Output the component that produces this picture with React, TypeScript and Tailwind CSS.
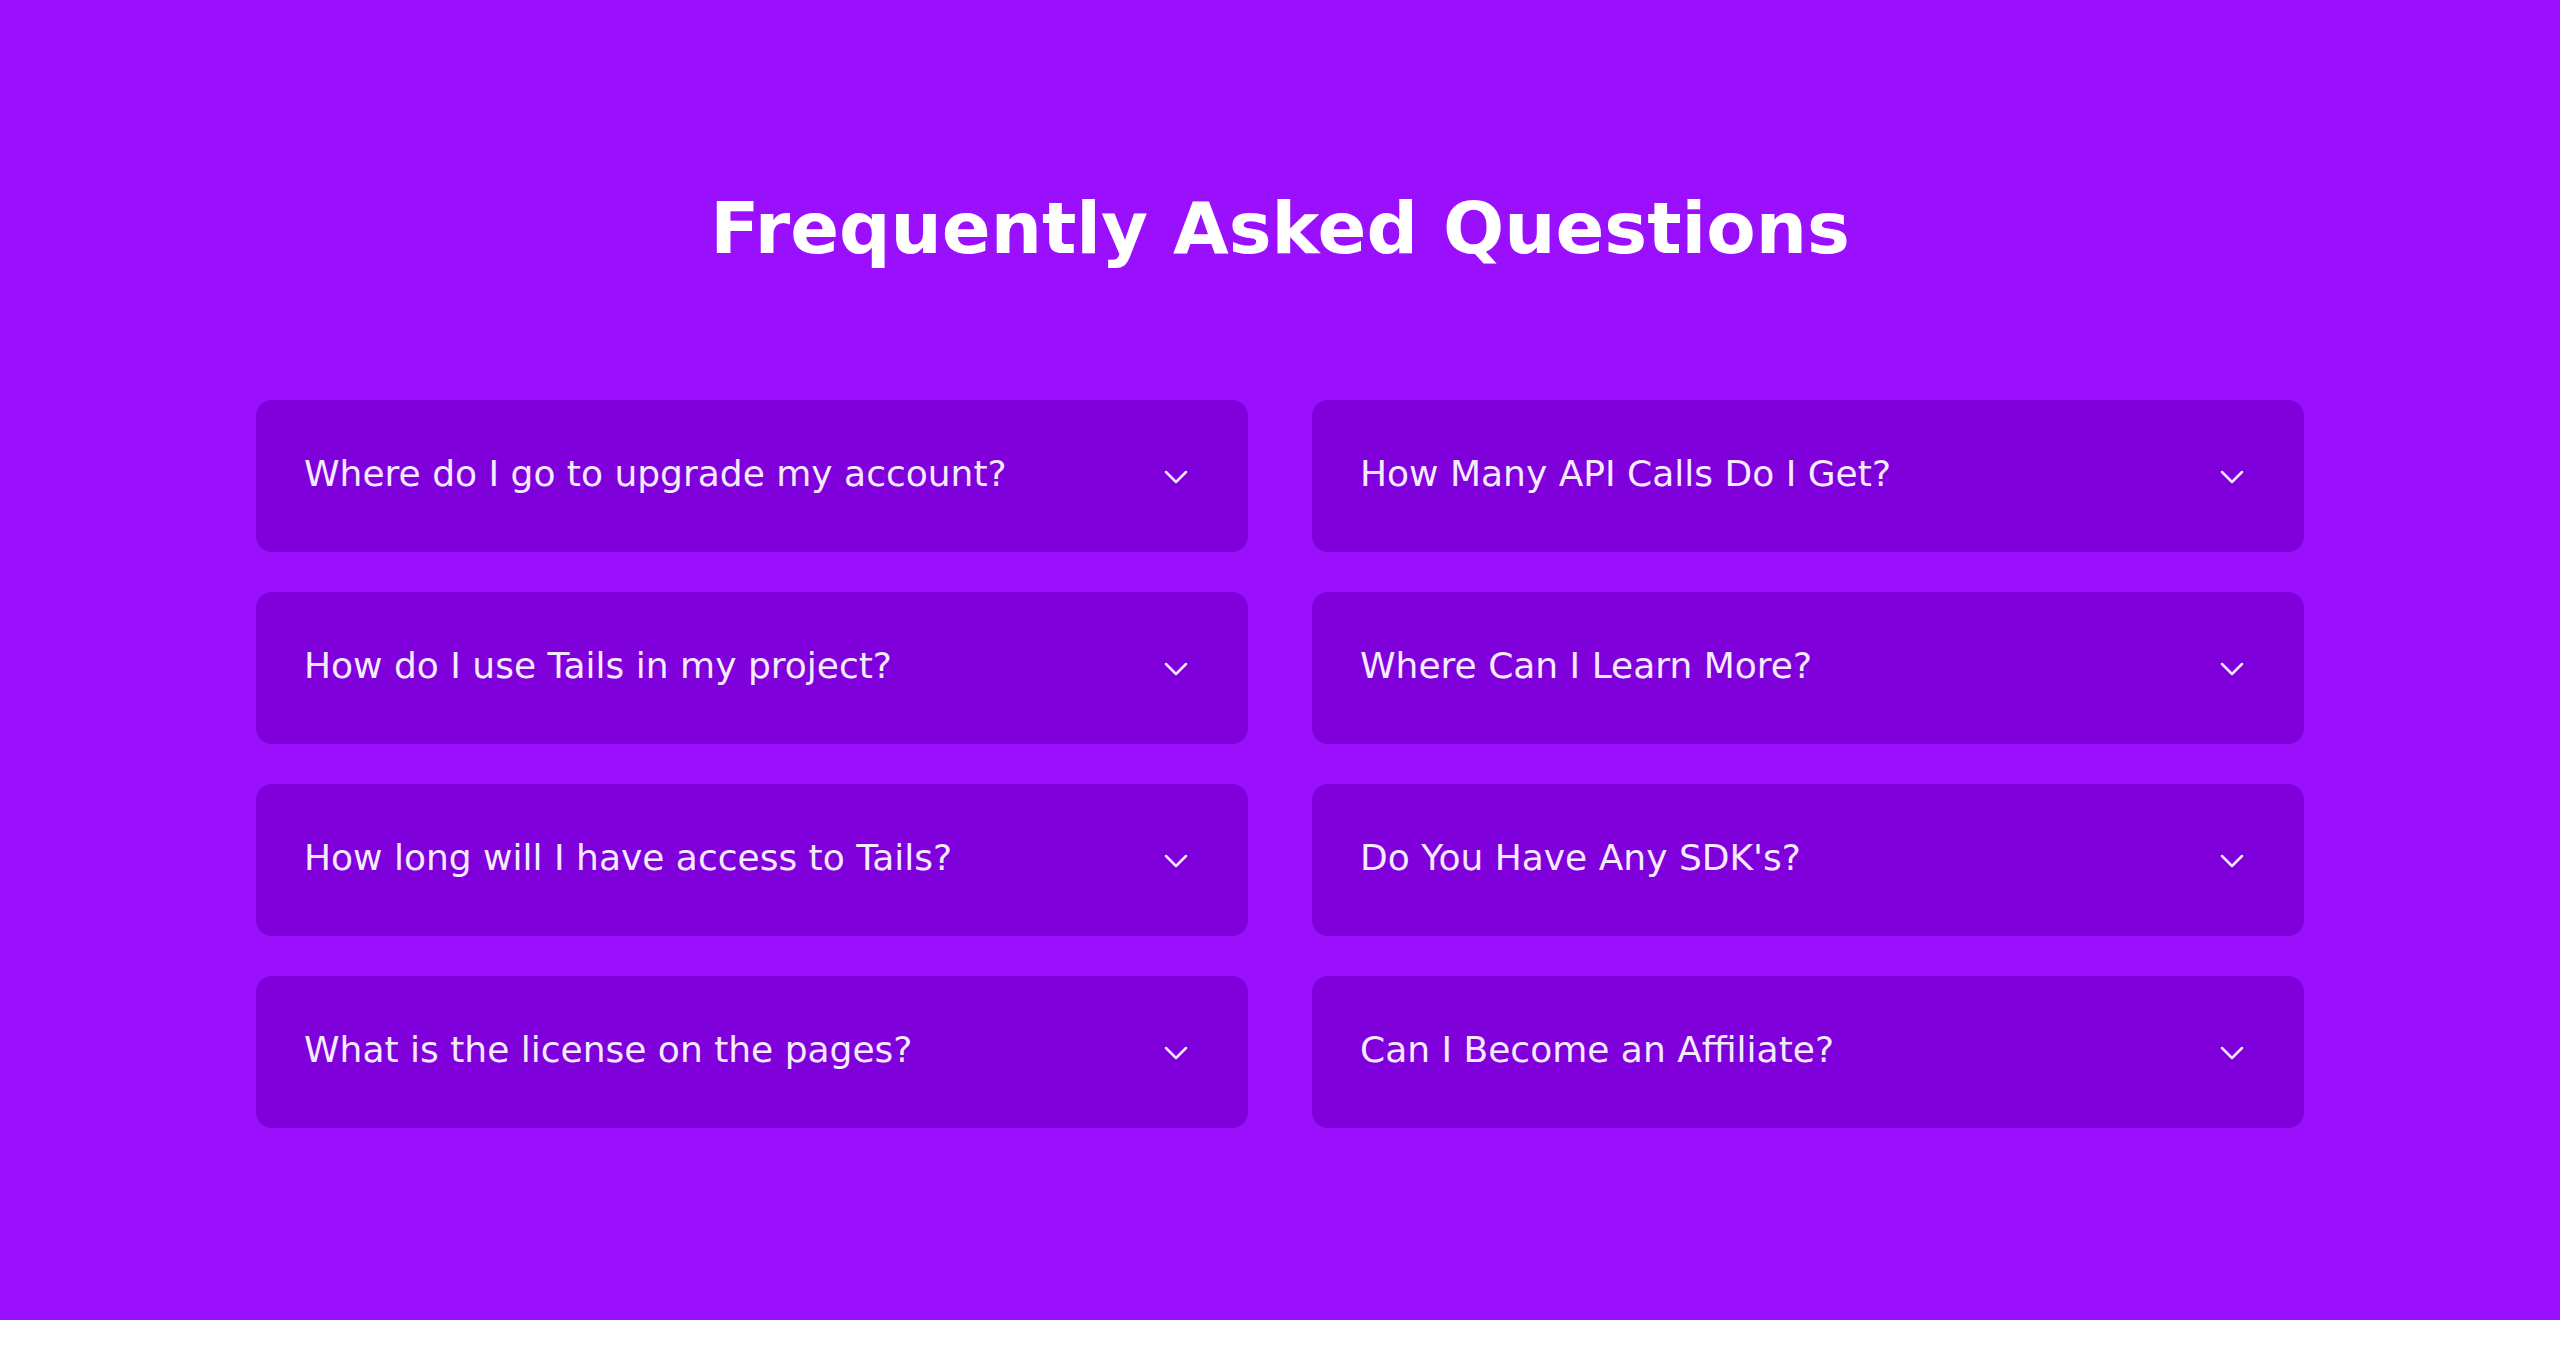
import React from 'react';
import { ChevronDown } from 'lucide-react';

const leftQuestions = [
  'Where do I go to upgrade my account?',
  'How do I use Tails in my project?',
  'How long will I have access to Tails?',
  'What is the license on the pages?',
];

const rightQuestions = [
  'How Many API Calls Do I Get?',
  'Where Can I Learn More?',
  "Do You Have Any SDK's?",
  'Can I Become an Affiliate?',
];

const FaqItem = ({ question }: { question: string }) => (
  <button
    type="button"
    className="flex h-[152px] w-full items-center justify-between rounded-2xl bg-[#8000dc] pl-12 pr-[52px] text-left"
  >
    <span className="mb-[4px] text-[36px] leading-none text-[#f5eaff]">{question}</span>
    <ChevronDown className="mt-[2px] h-10 w-10 text-[#f5eaff]" strokeWidth={1.5} />
  </button>
);

const App = () => {
  return (
    <div className="min-h-[1352px] bg-white" style={{ fontFamily: '"DejaVu Sans", sans-serif' }}>
      <section className="bg-[#9b10fc] pt-[192px] pb-[192px]">
        <h1 className="text-center text-[72px] font-bold leading-none text-white">
          Frequently Asked Questions
        </h1>
        <div className="mx-auto mt-[136px] grid w-[2048px] grid-cols-2 gap-x-16">
          <div className="flex flex-col gap-10">
            {leftQuestions.map((q) => (
              <FaqItem key={q} question={q} />
            ))}
          </div>
          <div className="flex flex-col gap-10">
            {rightQuestions.map((q) => (
              <FaqItem key={q} question={q} />
            ))}
          </div>
        </div>
      </section>
    </div>
  );
};

export default App;
